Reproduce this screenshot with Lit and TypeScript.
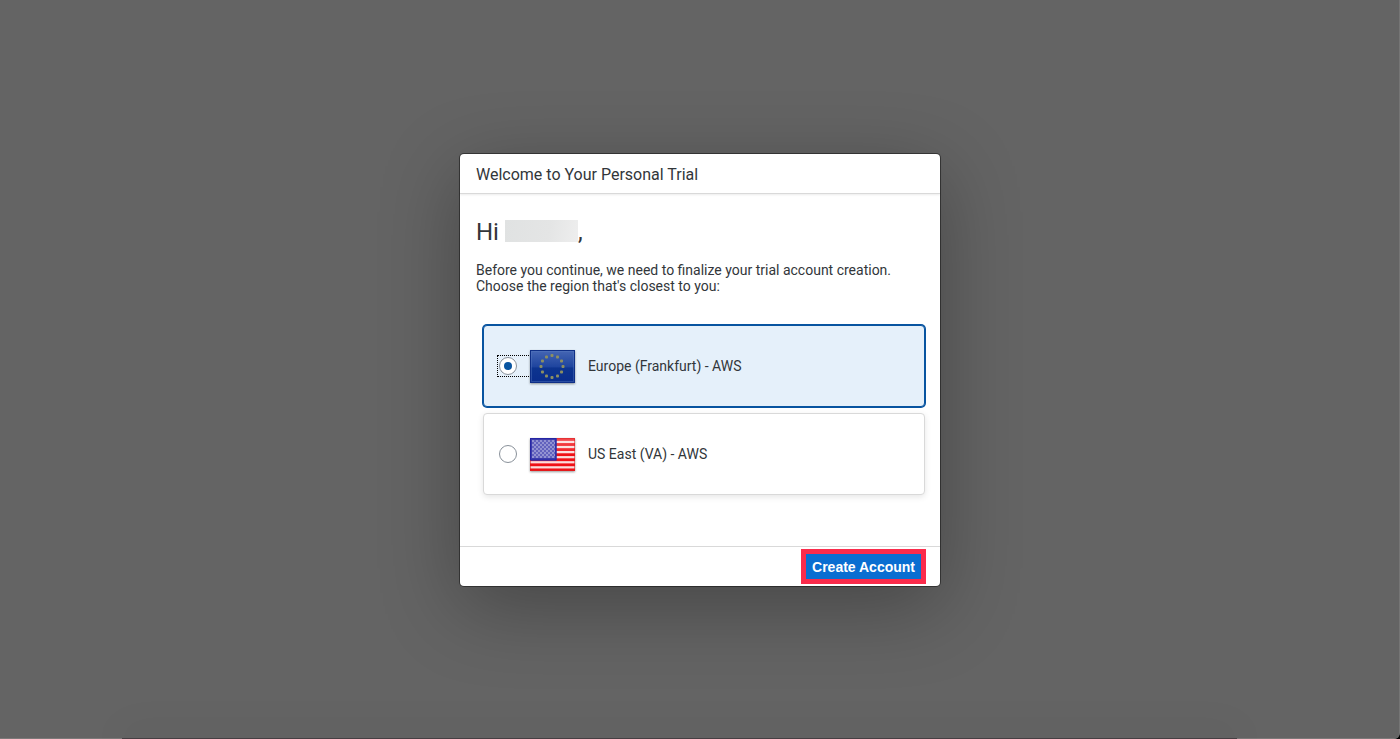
import { LitElement, html, css, svg } from "lit";
import { customElement, state, property } from "lit/decorators.js";

interface Region {
  id: string;
  label: string;
}

const REGIONS: Region[] = [
  { id: "eu", label: "Europe (Frankfurt) - AWS" },
  { id: "us", label: "US East (VA) - AWS" },
];

@customElement("region-flag")
class RegionFlag extends LitElement {
  @property() country = "eu";

  static styles = css`
    :host {
      display: block;
      width: 45px;
      height: 33px;
      filter: drop-shadow(0 1px 1px rgba(0, 0, 0, 0.4));
    }
    svg {
      display: block;
    }
  `;

  private europe() {
    const stars = Array.from({ length: 12 }, (_, i) => {
      const a = (i * Math.PI) / 6;
      return svg`<rect x=${22 + 11 * Math.sin(a) - 1.5} y=${16.5 - 11 * Math.cos(a) - 1.5} width="3" height="3" rx="1" fill="#8c8f62" />`;
    });
    return svg`
      <rect width="45" height="33" fill="url(#blue)" />
      <rect x="1.5" y="1.5" width="42" height="30" fill="none" stroke="#5a7cc0" stroke-opacity="0.4" />
      <rect x="0.5" y="0.5" width="44" height="32" fill="none" stroke="#0f2f86" />
      ${stars}`;
  }

  private usa() {
    const step = 33 / 13;
    const stripes = [0, 2, 4, 6, 8, 10, 12].map(
      (i) => svg`<rect y=${i * step} width="45" height=${step + 0.3} fill="#f01016" />`
    );
    return svg`
      <rect width="45" height="33" fill="#fbdcdc" />
      ${stripes}
      <rect width="45" height="16" fill="url(#shine)" />
      <rect width="26.500" height="22.500" fill="#3c3cac" />
      <rect x="2" y="2" width="23" height="18" fill="url(#stars)" />
      <rect x="0.5" y="0.5" width="25.5" height="21.5" fill="none" stroke="#2525a4" />
      <path d="M27 .5H44.500V32.500H.5V22" fill="none" stroke="#d92020" stroke-opacity="0.55" />`;
  }

  render() {
    return html`<svg width="45" height="33" viewBox="0 0 45 33" aria-hidden="true">
      <defs>
        <linearGradient id="blue" x1="0" y1="0" x2="0" y2="1">
          <stop offset="0" stop-color="#4767b4" />
          <stop offset="0.5" stop-color="#1f459f" />
          <stop offset="0.55" stop-color="#0d348f" />
          <stop offset="1" stop-color="#0a2d8c" />
        </linearGradient>
        <linearGradient id="shine" x1="0" y1="0" x2="0" y2="1">
          <stop offset="0" stop-color="#fff" stop-opacity="0.25" />
          <stop offset="1" stop-color="#fff" stop-opacity="0.05" />
        </linearGradient>
        <pattern id="stars" width="4" height="4" patternUnits="userSpaceOnUse">
          <rect width="4" height="4" fill="#6262bd" />
          <rect width="2" height="2" fill="#9292d2" />
          <rect x="2" y="2" width="2" height="2" fill="#9292d2" />
        </pattern>
      </defs>
      ${this.country === "eu" ? this.europe() : this.usa()}
    </svg>`;
  }
}

@customElement("app-root")
class AppRoot extends LitElement {
  @state() private selected = "eu";

  static styles = css`
    :host {
      display: block;
      background: #000;
      font-family: Roboto, "Liberation Sans", sans-serif;
      font-size: 14px;
      line-height: 16px;
      color: #32363a;
    }
    * {
      box-sizing: border-box;
    }
    .backdrop {
      display: grid;
      grid-template-rows: 1fr auto;
      min-height: 100vh;
      background: #646464;
      border-right: 1px solid #757575;
      border-bottom-right-radius: 6px;
      overflow: hidden;
    }
    .stage {
      display: grid;
      place-items: center;
      padding: 18px 16px 16px 17px;
    }
    .edge {
      padding: 0 162px 0 122px;
      background: #7c7979;
    }
    .shelf {
      height: 1px;
      background: #463f43;
      box-shadow: 0 0 40px 2px rgba(0, 0, 0, 0.2);
    }
    .dialog {
      width: 100%;
      max-width: 480px;
      background: #fff;
      border-radius: 4px;
      box-shadow: 0 0 0 1px rgba(0, 0, 0, 0.42), 0 20px 80px rgba(0, 0, 0, 0.3);
    }
    .header {
      padding: 13px 16px 10px;
      border-bottom: 1px solid #d9d9d9;
      box-shadow: 0 1px 2px rgba(0, 0, 0, 0.08);
    }
    .title {
      margin: 0;
      font-size: 16px;
      line-height: 16px;
      font-weight: 400;
    }
    .content {
      padding: 24px 16px 51px;
    }
    .greeting {
      display: flex;
      align-items: center;
      margin: 0 0 16px;
      font-size: 24px;
      line-height: 28px;
      font-weight: 400;
    }
    .name {
      width: 73px;
      height: 22px;
      margin: 0 0 2px 6px;
      background: linear-gradient(100deg, #e0e2e2, #e4e5e5 60%, #eee);
    }
    .intro {
      margin: 0;
    }
    .regions {
      display: grid;
      gap: 6px;
      margin: 31px 0 0;
      padding: 0 0 0 7px;
      border: 0;
    }
    .region {
      display: flex;
      align-items: center;
      height: 82px;
      margin-right: -1px;
      padding: 0 13px;
      border: 1px solid #d9d9d9;
      border-radius: 4px;
      box-shadow: 0 2px 6px rgba(0, 0, 0, 0.1);
      background: #fff;
      cursor: pointer;
    }
    .region.selected {
      background: #e5f0fa;
      border-color: #0854a0;
      box-shadow: 0 0 0 1px #0854a0;
    }
    .choice {
      display: flex;
      align-items: center;
      width: 34px;
      height: 22px;
      padding-left: 1px;
      border: 1px solid transparent;
    }
    .selected .choice {
      border: 1px dotted #000;
    }
    .radio {
      appearance: none;
      display: grid;
      place-items: center;
      width: 18px;
      height: 18px;
      margin: 0;
      border: 1px solid #89919a;
      border-radius: 50%;
      background: #fff;
      outline: none;
    }
    .radio:checked::before {
      content: "";
      width: 8px;
      height: 8px;
      border-radius: 50%;
      background: #0854a0;
    }
    .flag {
      margin: 0 13px 0 -1px;
    }
    .footer {
      display: flex;
      justify-content: flex-end;
      padding: 2px 14px;
      border-top: 1px solid #d9d9d9;
    }
    .create {
      height: 35px;
      padding: 0 6px;
      border: 5px solid #fb2b4b;
      background: #0a6ed1;
      color: #fff;
      font-family: "Liberation Sans", Arial, sans-serif;
      font-size: 14px;
      line-height: 16px;
      font-weight: 700;
      cursor: pointer;
    }
  `;

  render() {
    return html`
      <div class="backdrop">
        <div class="stage">
          <section class="dialog" role="dialog" aria-labelledby="title">
            <header class="header">
              <h1 class="title" id="title">Welcome to Your Personal Trial</h1>
            </header>
            <div class="content">
              <h2 class="greeting">Hi <span class="name"></span>,</h2>
              <p class="intro">
                Before you continue, we need to finalize your trial account creation.<br />
                Choose the region that's closest to you:
              </p>
              <fieldset class="regions">
                ${REGIONS.map(
                  (r) => html`<label class="region ${r.id === this.selected ? "selected" : ""}">
                    <span class="choice">
                      <input
                        class="radio"
                        type="radio"
                        name="region"
                        .checked=${r.id === this.selected}
                        @change=${() => (this.selected = r.id)}
                      />
                    </span>
                    <region-flag class="flag" country=${r.id}></region-flag>
                    <span>${r.label}</span>
                  </label>`
                )}
              </fieldset>
            </div>
            <footer class="footer">
              <button class="create" type="button">Create Account</button>
            </footer>
          </section>
        </div>
        <div class="edge"><div class="shelf"></div></div>
      </div>
    `;
  }
}
